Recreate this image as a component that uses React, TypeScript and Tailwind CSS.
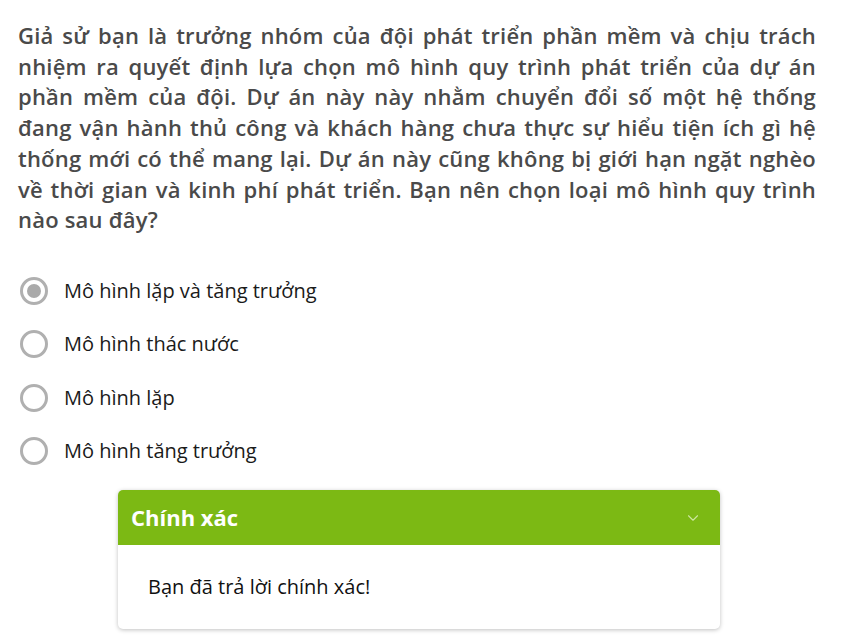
import { ChevronDown } from 'lucide-react';

const options = [
  'Mô hình lặp và tăng trưởng',
  'Mô hình thác nước',
  'Mô hình lặp',
  'Mô hình tăng trưởng',
];

export default function App() {
  const selected = 0;

  return (
    <div
      className="min-h-screen bg-white pt-[20px] pl-[18px] pr-[32px]"
      style={{ fontFamily: '"Open Sans", "Noto Sans", sans-serif' }}
    >
      <p className="w-[798px] text-[22px] leading-[30.7px] font-semibold text-[#4a4a4a] text-justify tracking-[0.2px]">
        Giả sử bạn là trưởng nhóm của đội phát triển phần mềm và chịu trách nhiệm ra quyết định lựa chọn mô hình quy trình phát triển của dự án phần mềm của đội. Dự án này này nhằm chuyển đổi số một hệ thống đang vận hành thủ công và khách hàng chưa thực sự hiểu tiện ích gì hệ thống mới có thể mang lại. Dự án này cũng không bị giới hạn ngặt nghèo về thời gian và kinh phí phát triển. Bạn nên chọn loại mô hình quy trình nào sau đây?
      </p>

      <ul className="mt-[43px] flex flex-col gap-[27.5px]">
        {options.map((opt, i) => (
          <li key={opt} className="flex items-center h-[26px]">
            <span className="w-[28px] h-[28px] rounded-full border-[3px] border-[#b0b0b0] flex items-center justify-center shrink-0 ml-[2px]">
              {i === selected && <span className="w-[14px] h-[14px] rounded-full bg-[#aaaaaa]" />}
            </span>
            <span className="ml-[16px] text-[20px] text-[#1a1a1a]">{opt}</span>
          </li>
        ))}
      </ul>

      <div className="mt-[26px] ml-[100px] w-[602px] rounded-[5px] bg-white shadow-[0_1px_4px_rgba(0,0,0,0.25)] overflow-hidden">
        <div className="h-[55px] bg-[#7cb914] flex items-center justify-between pl-[13px] pr-[18px]">
          <span className="text-[22px] font-bold text-white">Chính xác</span>
          <ChevronDown className="w-[18px] h-[18px] text-[#cde69f]" strokeWidth={1.5} />
        </div>
        <div className="h-[84px] flex items-center pl-[30px]">
          <span className="text-[20px] text-[#111]">Bạn đã trả lời chính xác!</span>
        </div>
      </div>
    </div>
  );
}
